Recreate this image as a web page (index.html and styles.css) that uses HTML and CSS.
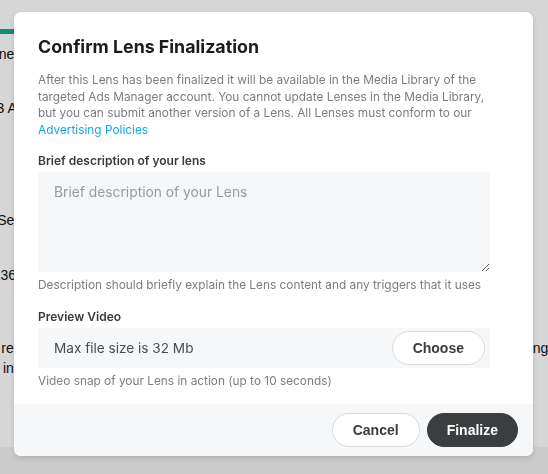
FILE: index.html
```html
<!DOCTYPE html>
<html lang="en">
<head>
    <meta charset="UTF-8">
    <meta name="viewport" content="width=device-width, initial-scale=1.0">
    <title>Confirm Lens Finalization</title>
    <link rel="stylesheet" href="styles.css">
</head>
<body>
    <div class="page">
        <div class="page-bar"></div>
        <div class="page-row row-1">Partner</div>
        <div class="page-row row-2">123 Ads</div>
        <div class="page-row row-3">Lens Se</div>
        <div class="page-row row-4">1236</div>
        <div class="page-row row-5">Lens re</div>
        <div class="page-row row-6">Sign in</div>
        <div class="page-footer"></div>
    </div>
    <div class="page-right">Pending</div>

    <div class="overlay"></div>

    <div class="modal">
        <div class="modal-body">
            <h2 class="modal-title">Confirm Lens Finalization</h2>
            <p class="modal-text">
                After this Lens has been finalized it will be available in the Media Library of the
                targeted Ads Manager account. You cannot update Lenses in the Media Library,
                but you can submit another version of a Lens. All Lenses must conform to our
                <a href="#" class="link">Advertising Policies</a>
            </p>

            <div class="field">
                <label class="field-label" for="description">Brief description of your lens</label>
                <textarea id="description" class="textarea" placeholder="Brief description of your Lens"></textarea>
                <div class="field-hint">Description should briefly explain the Lens content and any triggers that it uses</div>
            </div>

            <div class="field">
                <div class="field-label">Preview Video</div>
                <div class="file-box">
                    <span class="file-text">Max file size is 32 Mb</span>
                    <button class="btn btn-light">Choose</button>
                </div>
                <div class="field-hint">Video snap of your Lens in action (up to 10 seconds)</div>
            </div>
        </div>
        <div class="modal-footer">
            <button class="btn btn-light">Cancel</button>
            <button class="btn btn-dark">Finalize</button>
        </div>
    </div>
</body>
</html>
```

FILE: styles.css
```css
html, body {
    margin: 0;
    height: 100%;
    overflow: hidden;
}
body {
    font-family: Inter, "Liberation Sans", sans-serif;
    background-color: #fff;
}
.page {
    display: flex;
    flex-direction: column;
    height: 474px;
    font-family: "Liberation Sans", Arial, sans-serif;
    font-size: 14px;
    color: #111;
}
.page-bar {
    margin-top: 29px;
    width: 120px;
    height: 5px;
    background-color: #1aa58a;
}
.page-row {
    white-space: nowrap;
    line-height: 16px;
}
.row-1 { margin-top: 12px; margin-left: -27px; }
.row-2 { margin-top: 38px; margin-left: -19px; }
.row-3 { margin-top: 96px; margin-left: -37px; }
.row-4 { margin-top: 39px; margin-left: -15px; }
.row-5 { margin-top: 57px; margin-left: -33px; }
.row-6 { margin-top: 4px; margin-left: -29px; }
.page-footer {
    margin-top: auto;
    height: 27px;
    background-color: #f2f2f2;
}
.page-right {
    position: absolute;
    left: 497px;
    top: 340px;
    font-family: "Liberation Sans", Arial, sans-serif;
    font-size: 14px;
    color: #111;
}
.overlay {
    position: fixed;
    inset: 0;
    background-color: rgba(0, 0, 0, 0.16);
}
.modal {
    position: fixed;
    left: 14px;
    top: 12px;
    width: 519px;
    background-color: #fff;
    border-radius: 7px;
    overflow: hidden;
    box-shadow: 0 3px 6px rgba(0, 0, 0, 0.12), 0 0 2px rgba(0, 0, 0, 0.08);
}
.modal-body {
    display: flex;
    flex-direction: column;
    padding: 24px 43px 15px 24px;
}
.modal-title {
    margin: 0;
    font-size: 17.8px;
    font-weight: 700;
    color: #1b1b1b;
    line-height: 22px;
}
.modal-text {
    margin: 14px -4px 0 0;
    font-size: 11.85px;
    line-height: 16.5px;
    color: #7b7d80;
}
.link {
    color: #12a6f2;
    text-decoration: none;
}
.field {
    display: flex;
    flex-direction: column;
}
.modal-text + .field {
    margin-top: 15px;
}
.field + .field {
    margin-top: 16px;
}
.field-label {
    font-size: 12px;
    font-weight: 600;
    color: #3a3b3d;
    line-height: 16px;
    margin-bottom: 3px;
}
.textarea {
    display: block;
    height: 100px;
    box-sizing: border-box;
    margin: 0;
    border: none;
    border-radius: 4px;
    background-color: #f6f7f8;
    padding: 12px 16px;
    font-family: Inter, "Liberation Sans", sans-serif;
    font-size: 13.8px;
    color: #333;
    resize: vertical;
    outline: none;
}
.textarea::placeholder {
    color: #9a9b9d;
}
.field-hint {
    margin-top: 5px;
    font-size: 11.85px;
    line-height: 16px;
    color: #7b7d80;
}
.file-box {
    display: flex;
    align-items: center;
    justify-content: space-between;
    height: 40px;
    padding: 0 5px 0 16px;
    border-radius: 4px;
    background-color: #f6f7f8;
}
.file-text {
    font-size: 13.6px;
    color: #4a4b4d;
}
.btn {
    box-sizing: border-box;
    height: 34px;
    margin: 0;
    padding: 0 20px;
    border-radius: 17px;
    font-family: "Liberation Sans", Arial, sans-serif;
    font-size: 14px;
    font-weight: 700;
    cursor: pointer;
}
.btn-light {
    background-color: #fff;
    border: 1px solid #d9dadc;
    color: #3a3b3d;
}
.btn-dark {
    padding: 0 19px;
    background-color: #3b3d3f;
    border: 1px solid #3b3d3f;
    color: #fff;
}
.modal-footer {
    display: flex;
    align-items: center;
    justify-content: flex-end;
    gap: 7px;
    height: 52px;
    padding: 0 15px;
    background-color: #f6f7f8;
}
```
